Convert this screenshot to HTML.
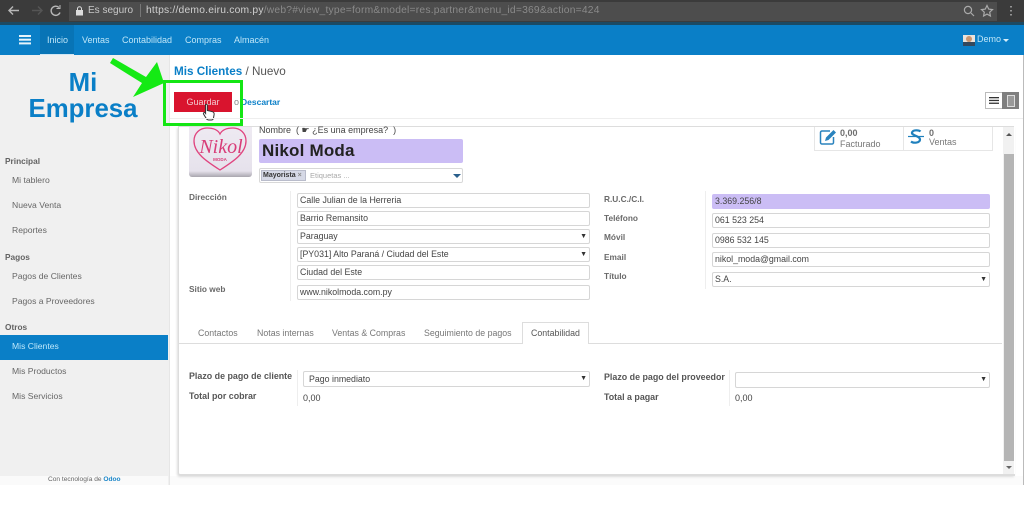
<!DOCTYPE html>
<html><head><meta charset="utf-8"><style>
html,body{margin:0;padding:0;background:#fff}
#p{position:relative;width:1024px;height:525px;overflow:hidden;background:#fff;font-family:"Liberation Sans",sans-serif;font-size:9px;color:#555;filter:blur(.35px)}
#p div,#p span.a,#p svg{position:absolute}
.t{white-space:nowrap;line-height:12px}
.nav{color:#bfe6f8;font-size:9px;top:34px}
.side{color:#666;font-size:8.6px;left:12px}
.sh{color:#4a4a4a;font-size:8.3px;left:5px;font-weight:bold;opacity:.85}
.lb{color:#444;font-size:8.3px;font-weight:bold;opacity:.8}
.lb2{color:#444;font-size:8.9px;font-weight:bold;opacity:.9}
.in{background:#fff;border:1px solid #d6d6d6;border-radius:2px;box-sizing:border-box;height:15px;color:#444;font-size:8.8px;line-height:13px;padding-left:2px;white-space:nowrap}
.ar{font-size:7px;color:#333;right:2px;top:0}
.tab{color:#777;font-size:8.8px;top:327px}
</style></head><body><div id="p">
<div style="left:0;top:0;width:1024px;height:24px;background:#3b3b3b"></div>
<div style="left:69px;top:2px;width:928px;height:19px;background:#4d4d4d"></div>
<div style="left:0;top:22px;width:1024px;height:3px;background:#1c4a63"></div>
<svg style="left:6px;top:3px" width="55" height="16" viewBox="0 0 55 16" fill="none" stroke="#b8b8b8" stroke-width="1.4"><path d="M13 7.500H3M7 3.500l-4 4 4 4"/><path d="M36 7.500H26M32 3.500l4 4-4 4" stroke="#555"/><path d="M53 4.500a4.600 4.600 0 1 0 1 5"/><path d="M54 2v3.500h-3.500" stroke-width="1"/></svg>
<svg style="left:75px;top:6px" width="9" height="10" viewBox="0 0 9 10"><rect x="1" y="4" width="7" height="5.500" fill="#ddd"/><path d="M2.500 4V2.800a2 2 0 0 1 4 0V4" fill="none" stroke="#ddd"/></svg>
<div class="t" style="left:88px;top:5px;color:#c8c8c8;font-size:10px">Es seguro</div>
<div style="left:140px;top:4px;width:1px;height:13px;background:#777"></div>
<div class="t" style="left:146px;top:5px;color:#cfcfcf;font-size:10.300px;letter-spacing:.02em">https://demo.eiru.com.py<span style="color:#8a8a8a">/web?#view_type=form&amp;model=res.partner&amp;menu_id=369&amp;action=424</span></div>
<svg style="left:962px;top:4px" width="50" height="14" viewBox="0 0 50 14" fill="none" stroke="#aaa" stroke-width="1.200"><circle cx="6" cy="6" r="3.600"/><path d="M9 9l3 3"/><path d="M25 1.500l1.700 3.600 3.800.5-2.800 2.600.7 3.800-3.400-1.900-3.400 1.900.7-3.800-2.800-2.600 3.800-.5z"/><path d="M49 2v1.500M49 6v1.500M49 10v1.500" stroke-width="1.600"/></svg>

<div style="left:0;top:25px;width:1024px;height:30px;background:#0a7fc7"></div>
<div style="left:40px;top:25px;width:34px;height:30px;background:#0874b6"></div>
<div style="left:40px;top:54px;width:34px;height:1px;background:#cfe6f4"></div>
<svg style="left:19px;top:35px" width="12" height="10" viewBox="0 0 12 10" fill="#e6f4fb"><rect width="12" height="2" y="0"/><rect width="12" height="2" y="3.700"/><rect width="12" height="2" y="7.400"/></svg>
<div class="t nav" style="left:47px">Inicio</div>
<div class="t nav" style="left:82px">Ventas</div>
<div class="t nav" style="left:122px">Contabilidad</div>
<div class="t nav" style="left:185px">Compras</div>
<div class="t nav" style="left:234px">Almacén</div>
<div style="left:963px;top:35px;width:12px;height:11px;background:#e9e3dc"></div>
<div style="left:966px;top:36px;width:6px;height:6px;background:#c9956f;border-radius:3px"></div>
<div style="left:963px;top:42px;width:12px;height:4px;background:#33495e"></div>
<div class="t nav" style="left:977px;top:33px">Demo</div>
<div style="left:1003px;top:38.500px;width:0;height:0;border:3px solid transparent;border-top-color:#d5eefa;border-bottom:0"></div>

<div style="left:170px;top:476px;width:853px;height:9px;background:#fbfbfb"></div>
<div style="left:0;top:55px;width:169px;height:430px;background:#f0f0f0"></div>
<div style="left:169px;top:55px;width:1px;height:430px;background:#e6e6e6"></div>
<div style="left:1023px;top:55px;width:1px;height:430px;background:#bbb"></div>
<div class="t" style="left:0;width:166px;text-align:center;top:71px;color:#0a7fc7;font-size:25.800px;line-height:25.500px;font-weight:bold">Mi<br>Empresa</div>
<div class="t sh" style="top:155px">Principal</div>
<div class="t side" style="top:174px">Mi tablero</div>
<div class="t side" style="top:199px">Nueva Venta</div>
<div class="t side" style="top:224px">Reportes</div>
<div class="t sh" style="top:251px">Pagos</div>
<div class="t side" style="top:270px">Pagos de Clientes</div>
<div class="t side" style="top:295px">Pagos a Proveedores</div>
<div class="t sh" style="top:321px">Otros</div>
<div style="left:0;top:335px;width:168px;height:25px;background:#0a7fc7"></div>
<div class="t side" style="top:340px;color:#bfe8fb">Mis Clientes</div>
<div class="t side" style="top:365px">Mis Productos</div>
<div class="t side" style="top:390px">Mis Servicios</div>
<div style="left:0;top:476px;width:168px;height:9px;background:#fafafa"></div>
<div class="t" style="left:48px;top:474px;font-size:6.600px;color:#666">Con tecnología de <b style="color:#1b86c8">Odoo</b></div>

<div class="t" style="left:174px;top:65px;font-size:11.700px;line-height:14px;color:#555"><b style="color:#0a7fc7">Mis Clientes</b> / Nuevo</div>
<div style="left:174px;top:92px;width:58px;height:20px;background:#d9142e"></div>
<div class="t" style="left:174px;width:58px;text-align:center;top:96px;color:#f3c9d0;font-size:9px">Guardar</div>
<div class="t" style="left:234px;top:96px;font-size:9px;color:#888">o</div>
<div class="t" style="left:241px;top:96px;font-size:8.500px;color:#0a7fc7;font-weight:bold">Descartar</div>
<div style="left:163px;top:80px;width:80px;height:46px;box-sizing:border-box;border:3px solid #14e614"></div>
<svg style="left:100px;top:52px" width="70" height="50" viewBox="0 0 70 50"><path d="M10 11L13 6 46 25 57 10 64 31 33 45 42 31Z" fill="#14ea14"/></svg>
<svg style="left:202px;top:103px" width="14" height="18" viewBox="0 0 14 18"><path d="M3.500 1.500c1-.6 1.800 0 1.800 1v5l5 1.200c1.500.4 2 1.300 1.800 2.800l-.6 3.500c-.2 1.200-1 2-2.200 2H6.500c-1 0-1.600-.5-2.100-1.300L1.500 11c-.5-1 .6-2 1.500-1.200l.6.700z" fill="#fff" stroke="#333" stroke-width="1"/></svg>
<div style="left:985px;top:92px;width:34px;height:17px;background:#fff;border:1px solid #bbb;box-sizing:border-box"></div>
<div style="left:1002px;top:92px;width:17px;height:17px;background:#7f7f7f"></div>
<div style="left:1007px;top:95px;width:6px;height:10px;border:1px solid #ddd;background:#999"></div>
<svg style="left:989px;top:97px" width="10" height="7" viewBox="0 0 10 7" fill="#333"><rect width="10" height="1.300"/><rect y="2.800" width="10" height="1.300"/><rect y="5.600" width="10" height="1.300"/></svg>

<div style="left:170px;top:118px;width:853px;height:1px;background:#eee"></div>
<div style="left:178px;top:127px;width:836px;height:347px;background:#fff;border-left:1px solid #ddd;border-bottom:2px solid #ddd;box-shadow:-1px 1px 2px #ddd;border-bottom-left-radius:3px"></div>
<div style="left:178px;top:126px;width:836px;height:1px;background:#ddd"></div>
<div style="left:1003px;top:127px;width:11px;height:347px;background:#f1f1f1"></div>
<div style="left:1004px;top:154px;width:10px;height:307px;background:#b5b5b5"></div>
<div style="left:1006px;top:133px;width:0;height:0;border:3px solid transparent;border-bottom-color:#555;border-top:0"></div>
<div style="left:1006px;top:466px;width:0;height:0;border:3px solid transparent;border-top-color:#666;border-bottom:0"></div>

<div style="left:189px;top:127px;width:63px;height:50px;background:linear-gradient(#eeeaf2 0,#e6e2ec 88%,#a9a6ae 100%);border-radius:0 0 3px 3px"></div>
<svg style="left:192px;top:127px" width="56" height="47" viewBox="0 0 56 47" fill="none" stroke="#e0447f"><path d="M28 43C14 34 2 26 2 14 2 6 8 1 15 1c6 0 11 2 13 6 2-4 7-6 13-6 7 0 13 5 13 13 0 12-12 20-26 29z" stroke-width="1.300"/></svg>
<div class="t" style="left:193px;top:136px;width:56px;text-align:center;font:italic 20px 'Liberation Serif',serif;line-height:22px;color:#d83c78">Nikol</div>
<div class="t" style="left:195px;top:157px;width:50px;text-align:center;font-size:4.500px;line-height:5px;font-weight:bold;color:#d83c78">MODA</div>

<div class="t" style="left:259px;top:124px;font-size:9px;color:#444">Nombre &nbsp;( ☛ ¿Es una empresa? &nbsp;)</div>
<div style="left:259px;top:139px;width:204px;height:24px;background:#cbbdf5;border-radius:2px"></div>
<div class="t" style="left:262px;top:142px;font-size:17px;line-height:18px;font-weight:bold;color:#222;letter-spacing:.2px">Nikol Moda</div>
<div style="left:259px;top:168px;width:204px;height:15px;background:#fff;border:1px solid #d8d8d8;box-sizing:border-box;border-radius:2px"></div>
<div style="left:261px;top:170px;width:45px;height:11px;background:#d6d9e6;border:1px solid #b9bccb;box-sizing:border-box"></div>
<div class="t" style="left:263px;top:170px;font-size:7px;line-height:11px;color:#333;font-weight:bold">Mayorista <span style="color:#888">×</span></div>
<div class="t" style="left:310px;top:170px;font-size:7.500px;line-height:11px;color:#aaa">Etiquetas ...</div>
<div style="left:453px;top:174px;width:0;height:0;border:4px solid transparent;border-top-color:#2a5f8c;border-bottom:0"></div>

<div style="left:814px;top:127px;width:179px;height:24px;background:#fff;border:1px solid #e6e6e6;border-top:0;box-sizing:border-box"></div>
<div style="left:903px;top:127px;width:1px;height:24px;background:#e6e6e6"></div>
<svg style="left:819px;top:128px" width="18" height="18" viewBox="0 0 18 18" fill="none"><path d="M11 3H3a1.500 1.500 0 0 0-1.500 1.500v10A1.500 1.500 0 0 0 3 16h10a1.500 1.500 0 0 0 1.500-1.500V9" stroke="#2a83be" stroke-width="1.500"/><path d="M7 9.500L14.500 2 17 4.500 9.500 12 6 13z" fill="#2a83be"/></svg>
<div class="t" style="left:840px;top:127px;font-size:9px;font-weight:bold;color:#555;opacity:.85">0,00</div>
<div class="t" style="left:840px;top:138px;font-size:9px;color:#777">Facturado</div>
<svg style="left:907px;top:129px" width="18" height="16" viewBox="0 0 18 16" fill="none" stroke="#1f80bd"><path d="M13.500 2.500C12 1 6 .5 5 3.500c-.8 3 8 3.500 8 7 0 3.500-6.500 4-9 2" stroke-width="2.200"/><path d="M1 7.500h16" stroke-width="1.200"/></svg>
<div class="t" style="left:929px;top:127px;font-size:9px;font-weight:bold;color:#555;opacity:.85">0</div>
<div class="t" style="left:929px;top:136px;font-size:9px;color:#777">Ventas</div>

<div class="t lb" style="left:189px;top:191px">Dirección</div>
<div class="t lb" style="left:189px;top:283px">Sitio web</div>
<div style="left:290px;top:191px;width:1px;height:110px;background:#eee"></div>
<div class="in" style="left:297px;top:193px;width:293px">Calle Julian de la Herreria</div>
<div class="in" style="left:297px;top:211px;width:293px">Barrio Remansito</div>
<div class="in" style="left:297px;top:229px;width:293px">Paraguay<span class="a ar">▼</span></div>
<div class="in" style="left:297px;top:247px;width:293px">[PY031] Alto Paraná / Ciudad del Este<span class="a ar">▼</span></div>
<div class="in" style="left:297px;top:265px;width:293px">Ciudad del Este</div>
<div class="in" style="left:297px;top:285px;width:293px">www.nikolmoda.com.py</div>

<div class="t lb" style="left:604px;top:193px">R.U.C./C.I.</div>
<div class="t lb" style="left:604px;top:212px">Teléfono</div>
<div class="t lb" style="left:604px;top:231px">Móvil</div>
<div class="t lb" style="left:604px;top:251px">Email</div>
<div class="t lb" style="left:604px;top:270px">Título</div>
<div style="left:705px;top:191px;width:1px;height:98px;background:#eee"></div>
<div class="in" style="left:712px;top:194px;width:278px;background:#cbbdf5;border-color:#cbbdf5">3.369.256/8</div>
<div class="in" style="left:712px;top:213px;width:278px">061 523 254</div>
<div class="in" style="left:712px;top:233px;width:278px">0986 532 145</div>
<div class="in" style="left:712px;top:252px;width:278px">nikol_moda@gmail.com</div>
<div class="in" style="left:712px;top:272px;width:278px">S.A.<span class="a ar">▼</span></div>

<div style="left:179px;top:343px;width:823px;height:1px;background:#ddd"></div>
<div class="t tab" style="left:198px">Contactos</div>
<div class="t tab" style="left:257px">Notas internas</div>
<div class="t tab" style="left:332px">Ventas &amp; Compras</div>
<div class="t tab" style="left:424px">Seguimiento de pagos</div>
<div style="left:522px;top:322px;width:67px;height:22px;background:#fff;border:1px solid #ddd;border-bottom:0;box-sizing:border-box"></div>
<div class="t tab" style="left:531px;color:#555">Contabilidad</div>

<div class="t lb2" style="left:189px;top:370px">Plazo de pago de cliente</div>
<div class="t lb2" style="left:189px;top:390px">Total por cobrar</div>
<div style="left:297px;top:370px;width:1px;height:36px;background:#eee"></div>
<div class="in" style="left:303px;top:371px;width:287px;height:16px;line-height:14px;padding-left:5px">Pago inmediato<span class="a ar">▼</span></div>
<div class="t" style="left:303px;top:392px;font-size:9px;color:#444">0,00</div>
<div class="t lb2" style="left:604px;top:371px">Plazo de pago del proveedor</div>
<div class="t lb2" style="left:604px;top:391px">Total a pagar</div>
<div style="left:729px;top:370px;width:1px;height:36px;background:#eee"></div>
<div class="in" style="left:735px;top:372px;width:255px;height:16px;line-height:14px"><span class="a ar">▼</span></div>
<div class="t" style="left:735px;top:392px;font-size:9px;color:#444">0,00</div>
</div></body></html>
